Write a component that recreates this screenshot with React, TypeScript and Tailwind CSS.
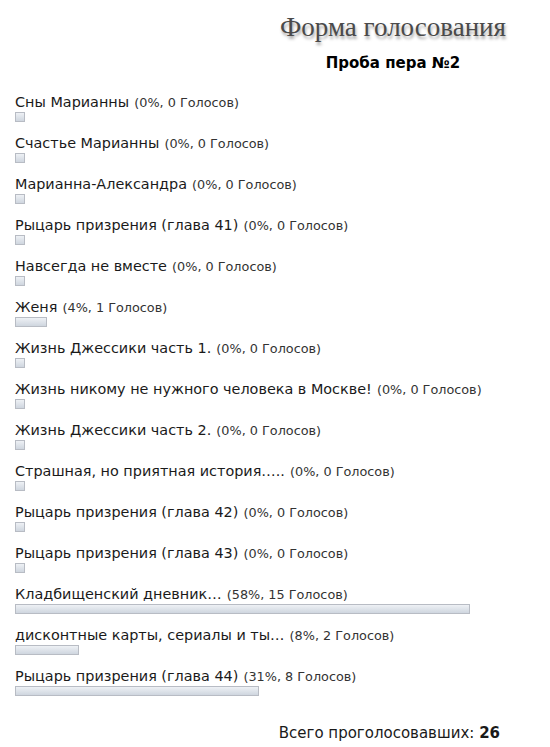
import React from 'react'

type PollOption = { label: string; percent: number; votes: number; barWidth: number }

const options: PollOption[] = [
  { label: 'Сны Марианны', percent: 0, votes: 0, barWidth: 10 },
  { label: 'Счастье Марианны', percent: 0, votes: 0, barWidth: 10 },
  { label: 'Марианна-Александра', percent: 0, votes: 0, barWidth: 10 },
  { label: 'Рыцарь призрения (глава 41)', percent: 0, votes: 0, barWidth: 10 },
  { label: 'Навсегда не вместе', percent: 0, votes: 0, barWidth: 10 },
  { label: 'Женя', percent: 4, votes: 1, barWidth: 32 },
  { label: 'Жизнь Джессики часть 1.', percent: 0, votes: 0, barWidth: 10 },
  { label: 'Жизнь никому не нужного человека в Москве!', percent: 0, votes: 0, barWidth: 10 },
  { label: 'Жизнь Джессики часть 2.', percent: 0, votes: 0, barWidth: 10 },
  { label: 'Страшная, но приятная история…..', percent: 0, votes: 0, barWidth: 10 },
  { label: 'Рыцарь призрения (глава 42)', percent: 0, votes: 0, barWidth: 10 },
  { label: 'Рыцарь призрения (глава 43)', percent: 0, votes: 0, barWidth: 10 },
  { label: 'Кладбищенский дневник…', percent: 58, votes: 15, barWidth: 455 },
  { label: 'дисконтные карты, сериалы и ты…', percent: 8, votes: 2, barWidth: 64 },
  { label: 'Рыцарь призрения (глава 44)', percent: 31, votes: 8, barWidth: 244 },
]

// ─── Single result row ─────────────────────────────────────────────
function ResultRow({ option }: { option: PollOption }) {
  return (
    <div className="flex flex-col">
      <div className="h-[20px] leading-[20px] whitespace-nowrap text-[#1a1a1a]">
        <span className="text-[14.4px]">{option.label}</span>{' '}
        <span className="text-[12.8px] text-[#333]">
          ({option.percent}%, {option.votes} Голосов)
        </span>
      </div>
      <div
        className="h-[10px] border border-[#b8bcc4] bg-gradient-to-b from-[#eef1f5] to-[#cfd6df]"
        style={{ width: option.barWidth }}
      />
    </div>
  )
}

export default function App() {
  return (
    <div className="w-[550px] h-[747px] bg-white font-['DejaVu_Sans',sans-serif] overflow-hidden">
      {/* Header */}
      <div className="flex justify-end pr-[39px] pt-[12px]">
        <div className="flex flex-col items-center w-[236px]">
          <h1 className="font-['Liberation_Serif',serif] text-[27px] leading-[30px] text-[#4a4a4a] [text-shadow:1px_3px_3px_rgba(0,0,0,0.35)] whitespace-nowrap">
            Форма голосования
          </h1>
          <h2 className="mt-[11px] text-[15px] leading-[20px] font-bold text-black whitespace-nowrap">
            Проба пера №2
          </h2>
        </div>
      </div>

      {/* Results */}
      <div className="flex flex-col gap-[11px] pl-[15px] pt-[19px]">
        {options.map((o, i) => (
          <ResultRow key={i} option={o} />
        ))}
      </div>

      {/* Total */}
      <div className="flex justify-end pr-[50px] mt-[27px] text-[15px] leading-[20px] text-[#1a1a1a]">
        Всего проголосовавших:&nbsp;<b>26</b>
      </div>
    </div>
  )
}
